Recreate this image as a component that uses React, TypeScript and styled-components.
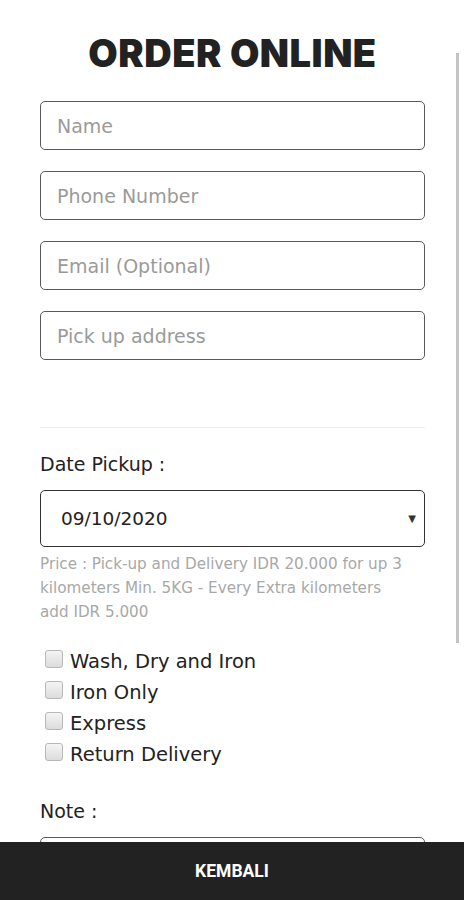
import styled, { createGlobalStyle } from "styled-components";
import React, { useState } from "react";

const GlobalStyle = createGlobalStyle`
  * {
    box-sizing: border-box;
  }
  body {
    margin: 0;
    background-color: #ffffff;
    font-family: "DejaVu Sans", "Open Sans", sans-serif;
    color: #222222;
  }
`;

const Page = styled.div`
  padding: 0 39px 70px 40px;
`;

const Title = styled.h1`
  margin: 0;
  padding-top: 31px;
  height: 101px;
  text-align: center;
  font-family: Inter, "Liberation Sans", sans-serif;
  font-weight: 900;
  font-size: 38px;
  line-height: 44px;
  color: #222222;
  letter-spacing: 0.5px;
`;

const Form = styled.form`
  display: flex;
  flex-direction: column;
`;

const Fields = styled.div`
  display: flex;
  flex-direction: column;
  gap: 21px;
`;

const TextInput = styled.input`
  height: 49px;
  width: 100%;
  padding: 0 16px;
  border: 1.5px solid #5a5a5a;
  border-radius: 5px;
  font-family: inherit;
  font-size: 19px;
  color: #222222;
  background: #ffffff;
  &::placeholder {
    color: #9a9a9a;
  }
  &:focus {
    outline: none;
  }
`;

const Divider = styled.hr`
  margin: 67px 0 0 0;
  border: 0;
  border-top: 1px solid #ececec;
`;

const FieldLabel = styled.label<{ $top: number }>`
  display: block;
  margin-top: ${(p) => p.$top}px;
  font-size: 19px;
  line-height: 24px;
  color: #222222;
`;

const SelectBox = styled.div`
  display: flex;
  align-items: center;
  margin-top: 14px;
  height: 57px;
  border: 1.5px solid #333333;
  border-radius: 5px;
  padding: 0 8px 0 20px;
`;

const Select = styled.select`
  flex: 1;
  appearance: none;
  border: 0;
  padding: 0;
  background: transparent;
  font-family: inherit;
  font-size: 18.5px;
  color: #222222;
  &:focus {
    outline: none;
  }
`;

const Arrow = styled.span`
  font-size: 10px;
  color: #333333;
`;

const Hint = styled.p`
  margin: 5px 0 0 0;
  max-width: 374px;
  font-size: 15.2px;
  line-height: 24px;
  color: #a8a8a8;
`;

const Options = styled.div`
  display: flex;
  flex-direction: column;
  margin-top: 22px;
  padding-left: 5px;
`;

const OptionRow = styled.label`
  display: flex;
  align-items: center;
  gap: 7px;
  height: 31px;
  font-size: 19.5px;
  color: #222222;
`;

const Check = styled.input`
  appearance: none;
  margin: 0;
  width: 18px;
  height: 18px;
  border: 1px solid #b8b8b8;
  border-radius: 3px;
  background: linear-gradient(#f4f4f4, #dcdcdc);
  transform: translateY(-3px);
  &:checked {
    background: #888888;
  }
`;

const NoteArea = styled.textarea`
  margin-top: 14px;
  height: 110px;
  width: 100%;
  border: 1.5px solid #5a5a5a;
  border-radius: 5px;
  resize: none;
  font-family: inherit;
  font-size: 18px;
`;

const Footer = styled.button`
  position: fixed;
  left: 0;
  right: 0;
  bottom: 0;
  height: 58px;
  border: 0;
  background-color: #222222;
  color: #ffffff;
  font-family: Roboto, "Liberation Sans", sans-serif;
  font-weight: 700;
  font-size: 17.5px;
  cursor: pointer;
`;

const ScrollThumb = styled.div`
  position: fixed;
  top: 53px;
  right: 5px;
  width: 3px;
  height: 590px;
  background-color: #c4c4c4;
`;

const services = ["Wash, Dry and Iron", "Iron Only", "Express", "Return Delivery"];

export default function App() {
  const [picked, setPicked] = useState<string[]>([]);
  const [date, setDate] = useState("09/10/2020");

  const onToggle = (e: React.ChangeEvent<HTMLInputElement>) => {
    const { value, checked } = e.target;
    setPicked((prev) =>
      checked ? [...prev, value] : prev.filter((s) => s !== value)
    );
  };

  return (
    <>
      <GlobalStyle />
      <Page>
        <Title>ORDER ONLINE</Title>
        <Form onSubmit={(e) => e.preventDefault()}>
          <Fields>
            <TextInput type="text" placeholder="Name" />
            <TextInput type="tel" placeholder="Phone Number" />
            <TextInput type="email" placeholder="Email (Optional)" />
            <TextInput type="text" placeholder="Pick up address" />
          </Fields>
          <Divider />
          <FieldLabel $top={24}>Date Pickup :</FieldLabel>
          <SelectBox>
            <Select value={date} onChange={(e) => setDate(e.target.value)}>
              <option>09/10/2020</option>
              <option>10/10/2020</option>
              <option>11/10/2020</option>
            </Select>
            <Arrow>▼</Arrow>
          </SelectBox>
          <Hint>
            Price : Pick-up and Delivery IDR 20.000 for up 3 kilometers Min. 5KG
            - Every Extra kilometers add IDR 5.000
          </Hint>
          <Options>
            {services.map((s) => (
              <OptionRow key={s}>
                <Check
                  type="checkbox"
                  value={s}
                  checked={picked.includes(s)}
                  onChange={onToggle}
                />
                {s}
              </OptionRow>
            ))}
          </Options>
          <FieldLabel $top={29}>Note :</FieldLabel>
          <NoteArea />
        </Form>
      </Page>
      <ScrollThumb />
      <Footer type="button">KEMBALI</Footer>
    </>
  );
}
